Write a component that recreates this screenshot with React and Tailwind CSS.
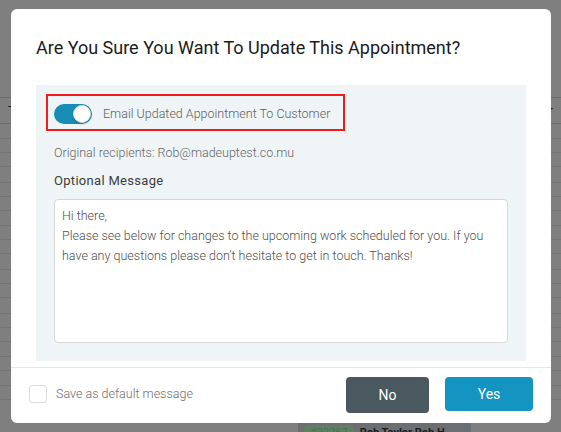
import React from "react";

const ROWS = [124, 140, 155, 170, 187, 202, 217, 233, 248, 263, 280, 295, 310, 327, 342, 357, 373, 388, 404, 419];

function Backdrop() {
  return (
    <div className="absolute inset-0 bg-[#7f7f7f]">
      <div className="h-[98px] border-b border-[#6b6b6b]" />
      <div className="flex h-[26px] items-center justify-between border-b border-[#6b6b6b] px-[8px] text-[13px] text-[#1a1a1a]">
        <span>T</span>
        <span>Fr</span>
      </div>
      {ROWS.slice(1).map((y, i) => (
        <div key={y} className="border-b border-[#747474]" style={{ height: y - ROWS[i] - 1 }} />
      ))}
      <div className="absolute left-[298px] top-[423px] flex h-[20px] w-[173px] items-center gap-[6px] bg-[#6c6f71] px-[6px] text-[11px]">
        <span className="rounded-[3px] bg-[#5f7f62] px-[6px] text-[#4c6e50]">#22267</span>
        <span className="font-bold text-[#1c1c1c]">Rob Taylor Rob H</span>
      </div>
    </div>
  );
}

function Toggle() {
  return (
    <div className="relative h-5 w-[38px] rounded-full bg-[#178db6]">
      <div className="absolute right-[1px] top-[1px] h-[18px] w-[18px] rounded-full border border-[#dcdcdc] bg-white shadow-[0_1px_2px_rgba(0,0,0,0.25)]" />
    </div>
  );
}

export default function App() {
  return (
    <div className="relative h-[432px] w-[561px] overflow-hidden font-['Roboto',sans-serif]">
      <Backdrop />

      <div className="absolute left-[11px] top-[9px] flex w-[540px] flex-col rounded-md bg-white">
        <h1 className="pl-[25px] pt-[26px] text-[18px] leading-[26px] font-normal text-[#1b1b1b]">
          Are You Sure You Want To Update This Appointment?
        </h1>

        <div className="mx-[25px] mt-[24px] bg-[#eff4f7] px-[18px] pb-[18px] pt-[19px] font-light">
          <div className="relative flex h-5 items-center gap-[11px]">
            <Toggle />
            <span className="text-[12.5px] text-[#606060]">Email Updated Appointment To Customer</span>
            <div className="pointer-events-none absolute left-[-8px] top-[-10px] h-[37px] w-[299px] border-2 border-[#f01c1c]" />
          </div>

          <p className="mt-[19px] text-[12.5px] leading-5 text-[#666]">
            Original recipients: Rob@madeuptest.co.mu
          </p>
          <p className="mt-2 text-[13px] font-normal leading-5 tracking-[0.3px] text-[#3d3d3d]">Optional Message</p>

          <div className="mt-2 h-[144px] rounded-[4px] border border-[#d8d8d8] bg-white px-[7px] pt-[6px] text-[12.5px] leading-5 text-[#4f4f4f]">
            <div>Hi there,</div>
            <div className="whitespace-nowrap">
              Please see below for changes to the upcoming work scheduled for you. If you
            </div>
            <div className="whitespace-nowrap">
              have any questions please don’t hesitate to get in touch. Thanks!
            </div>
          </div>
        </div>

        <div className="mt-[6px] flex h-[56px] items-start border-t border-[#e3e7e9] pl-[18px] pr-[18px] pt-[9px]">
          <label className="mt-[8px] flex items-center gap-[9px]">
            <span className="h-[18px] w-[18px] rounded-[3px] border border-[#dcdcdc] bg-white" />
            <span className="text-[12.5px] font-light text-[#6f6f6f]">Save as default message</span>
          </label>
          <div className="ml-auto flex gap-[16px]">
            <button className="h-[36px] w-[83px] rounded-[4px] bg-[#4a5860] text-[14px] text-white">No</button>
            <button className="h-[34px] w-[88px] rounded-[4px] bg-[#1495c1] text-[14px] text-white">Yes</button>
          </div>
        </div>
      </div>
    </div>
  );
}
